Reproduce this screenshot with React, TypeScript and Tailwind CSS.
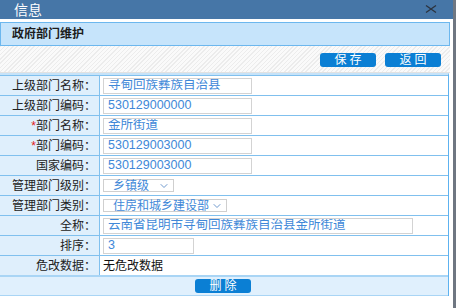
import { ChevronDown } from "lucide-react";

const cjk = "font-['Liberation_Sans','Noto_Sans_CJK_SC',sans-serif]";

interface Row {
  label: string
  required?: boolean
  kind: "input" | "select" | "text"
  value: string
  width: string
}

const rows: Row[] = [
  { label: "上级部门名称", kind: "input", value: "寻甸回族彝族自治县", width: "w-[149px]" },
  { label: "上级部门编码", kind: "input", value: "530129000000", width: "w-[149px]" },
  { label: "部门名称", required: true, kind: "input", value: "金所街道", width: "w-[149px]" },
  { label: "部门编码", required: true, kind: "input", value: "530129003000", width: "w-[149px]" },
  { label: "国家编码", kind: "input", value: "530129003000", width: "w-[149px]" },
  { label: "管理部门级别", kind: "select", value: "乡镇级", width: "w-[71px]" },
  { label: "管理部门类别", kind: "select", value: "住房和城乡建设部", width: "w-[124px]" },
  { label: "全称", kind: "input", value: "云南省昆明市寻甸回族彝族自治县金所街道", width: "w-[310px]" },
  { label: "排序", kind: "input", value: "3", width: "w-[91px]" },
  { label: "危改数据", kind: "text", value: "无危改数据", width: "" },
]

function BlueButton({ text }: { text: string }) {
  return (
    <button className="h-[14px] w-[56px] rounded-[3px] bg-[#0b7fd4] text-white text-[12px] leading-[14px] tracking-[3px] pl-[3px]">
      {text}
    </button>
  )
}

export default function App() {
  return (
    <div className={`w-[456px] h-[308px] flex overflow-hidden bg-white ${cjk}`}>
      <div className="w-[453px] flex flex-col bg-white">
        {/* title bar */}
        <div className="h-[19px] bg-[#4676a7] flex items-center justify-between pl-[14px] pr-[16px]">
          <span className="text-white text-[14px] leading-none">信息</span>
          <svg width="12" height="8" viewBox="0 0 12 8" className="mt-[-2px]">
            <path d="M1 0.5 L11 7.5 M11 0.5 L1 7.5" stroke="#2c3440" strokeWidth="1.3" />
          </svg>
        </div>

        <div className="pr-[3px] pt-[3px]">
          {/* section header */}
          <div className="h-[24px] border border-[#6cb7ee] bg-[#c6e4fb] flex items-center pl-[11px]">
            <span className="text-[12px] font-bold text-[#1c1c1c]">政府部门维护</span>
          </div>

          {/* toolbar */}
          <div className="h-[27px] border-b border-[#e2e2e2] bg-[repeating-linear-gradient(135deg,#ececec_0px,#ececec_1px,#fafafa_1px,#fafafa_3px)] flex items-center justify-end gap-[9px] pr-[9px] pt-[1px]">
            <BlueButton text="保存" />
            <BlueButton text="返回" />
          </div>

          {/* form table */}
          <div className="mr-[1px] border-t-2 border-[#c6e3f9] border-r border-r-[#5db2f0]">
            {rows.map((r) => (
              <div key={r.label} className="h-[20px] border-t border-[#80c0ee] flex">
                <div className="w-[100px] shrink-0 border-r border-[#80c0ee] bg-[#dfeffc] flex items-center justify-end pr-[3px] text-[12px] text-[#222]">
                  {r.required && <span className="text-[#e02020]">*</span>}
                  {r.label}：
                </div>
                <div className="flex-1 flex items-center pl-[3px]">
                  {r.kind === "input" && (
                    <div className={`${r.width} h-[16px] border border-[#d3d3d3] bg-white flex items-center pl-[4px] text-[12.5px] text-[#4088d8] whitespace-nowrap overflow-hidden`}>
                      {r.value}
                    </div>
                  )}
                  {r.kind === "select" && (
                    <div className={`${r.width} h-[13px] border border-[#cfcfcf] bg-white flex items-center justify-between pl-[9px] pr-[3px] text-[12px] text-[#4088d8] whitespace-nowrap`}>
                      <span>{r.value}</span>
                      <ChevronDown size={12} strokeWidth={1.6} className="text-[#4a7fc0]" />
                    </div>
                  )}
                  {r.kind === "text" && (
                    <span className="text-[12px] text-[#111]">{r.value}</span>
                  )}
                </div>
              </div>
            ))}
            <div className="h-[21px] border-t-2 border-[#a9d5f5] border-b border-b-[#a9d5f5] bg-[#e0f0fd] flex items-center justify-center pr-[2px]">
              <BlueButton text="删除" />
            </div>
          </div>
        </div>
      </div>
      <div className="flex-1 bg-[#6f7782]" />
    </div>
  )
}
